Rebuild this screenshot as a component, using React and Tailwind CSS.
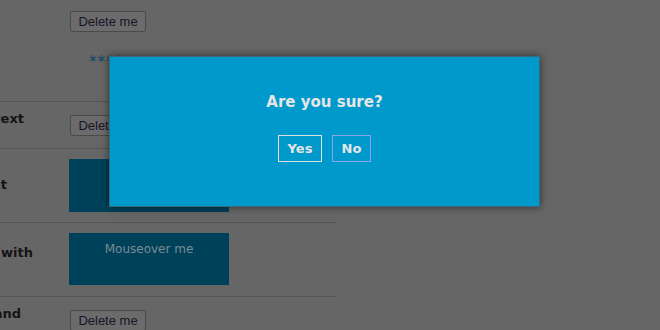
export default function App() {
  const label = "font-['DejaVu_Sans',Verdana,sans-serif] font-bold text-[13px] leading-4 text-[#141414] whitespace-nowrap";
  const delBtn =
    "h-[21px] w-[76px] px-0 whitespace-nowrap rounded-[2px] border border-[#4a4a4a] bg-[#6b6b6b] text-[13px] leading-none text-[#1a1428] font-['Liberation_Sans',Arial,sans-serif]";

  return (
    <div className="relative w-[660px] h-[330px] overflow-hidden bg-[#666666]">
      {/* page underneath the overlay */}
      <div className="w-[336px]">
        <div className="flex h-[102px] border-b border-[#555555]">
          <div className="w-[70px]" />
          <div className="pt-[11px] flex flex-col items-start">
            <button className={delBtn}>Delete me</button>
            <div className="mt-[22px] ml-[19px] text-[15px] leading-4 tracking-[1px] text-[#0b4a66] font-['DejaVu_Sans',sans-serif]">
              ****
            </div>
          </div>
        </div>

        <div className="flex h-[47px] border-b border-[#555555]">
          <div className="w-[70px] flex justify-end pr-[46px] overflow-hidden">
            <span className={label + " mt-[9px]"}>Custom text</span>
          </div>
          <div className="pt-[13px] flex items-start">
            <button className={delBtn}>Delete me</button>
          </div>
        </div>

        <div className="flex h-[74px] border-b border-[#555555]">
          <div className="w-[69px] flex justify-end pr-[62px] overflow-hidden">
            <span className={label + " mt-[28px]"}>Element</span>
          </div>
          <div className="pt-[10px]">
            <div className="w-[160px] h-[53px] bg-[#00415a]" />
          </div>
        </div>

        <div className="flex h-[74px] border-b border-[#555555]">
          <div className="w-[69px] flex justify-end pr-[36px] overflow-hidden">
            <span className={label + " mt-[22px]"}>Element with</span>
          </div>
          <div className="pt-[10px]">
            <div className="w-[160px] h-[52px] bg-[#00415a] pt-[8px] text-center text-[12px] leading-4 text-[#7a8b95] font-['DejaVu_Sans',Verdana,sans-serif]">
              Mouseover me
            </div>
          </div>
        </div>

        <div className="flex h-[40px]">
          <div className="w-[70px] flex justify-end pr-[49px] overflow-hidden">
            <span className={label + " mt-[9px]"}>Text and</span>
          </div>
          <div className="pt-[13px] flex items-start">
            <button className={delBtn}>Delete me</button>
          </div>
        </div>
      </div>

      {/* confirm dialog */}
      <div className="absolute left-[109px] top-[56px] w-[431px] h-[151px] bg-[#0099cc] border border-[#3a6a80] shadow-[0_0_8px_rgba(0,0,0,0.55)] flex flex-col items-center pt-[35px] font-['DejaVu_Sans',Verdana,sans-serif] text-[#e6e6e6]">
        <div className="text-[15px] font-bold leading-5">Are you sure?</div>
        <div className="mt-[23px] flex gap-[10px]">
          <button className="h-[27px] w-[44px] border border-[#e0e0e0] text-[13px] font-bold leading-none text-[#e6e6e6]">
            Yes
          </button>
          <button className="h-[27px] w-[39px] border border-[#8ea2ec] text-[13px] font-bold leading-none text-[#e6e6e6]">
            No
          </button>
        </div>
      </div>
    </div>
  );
}
